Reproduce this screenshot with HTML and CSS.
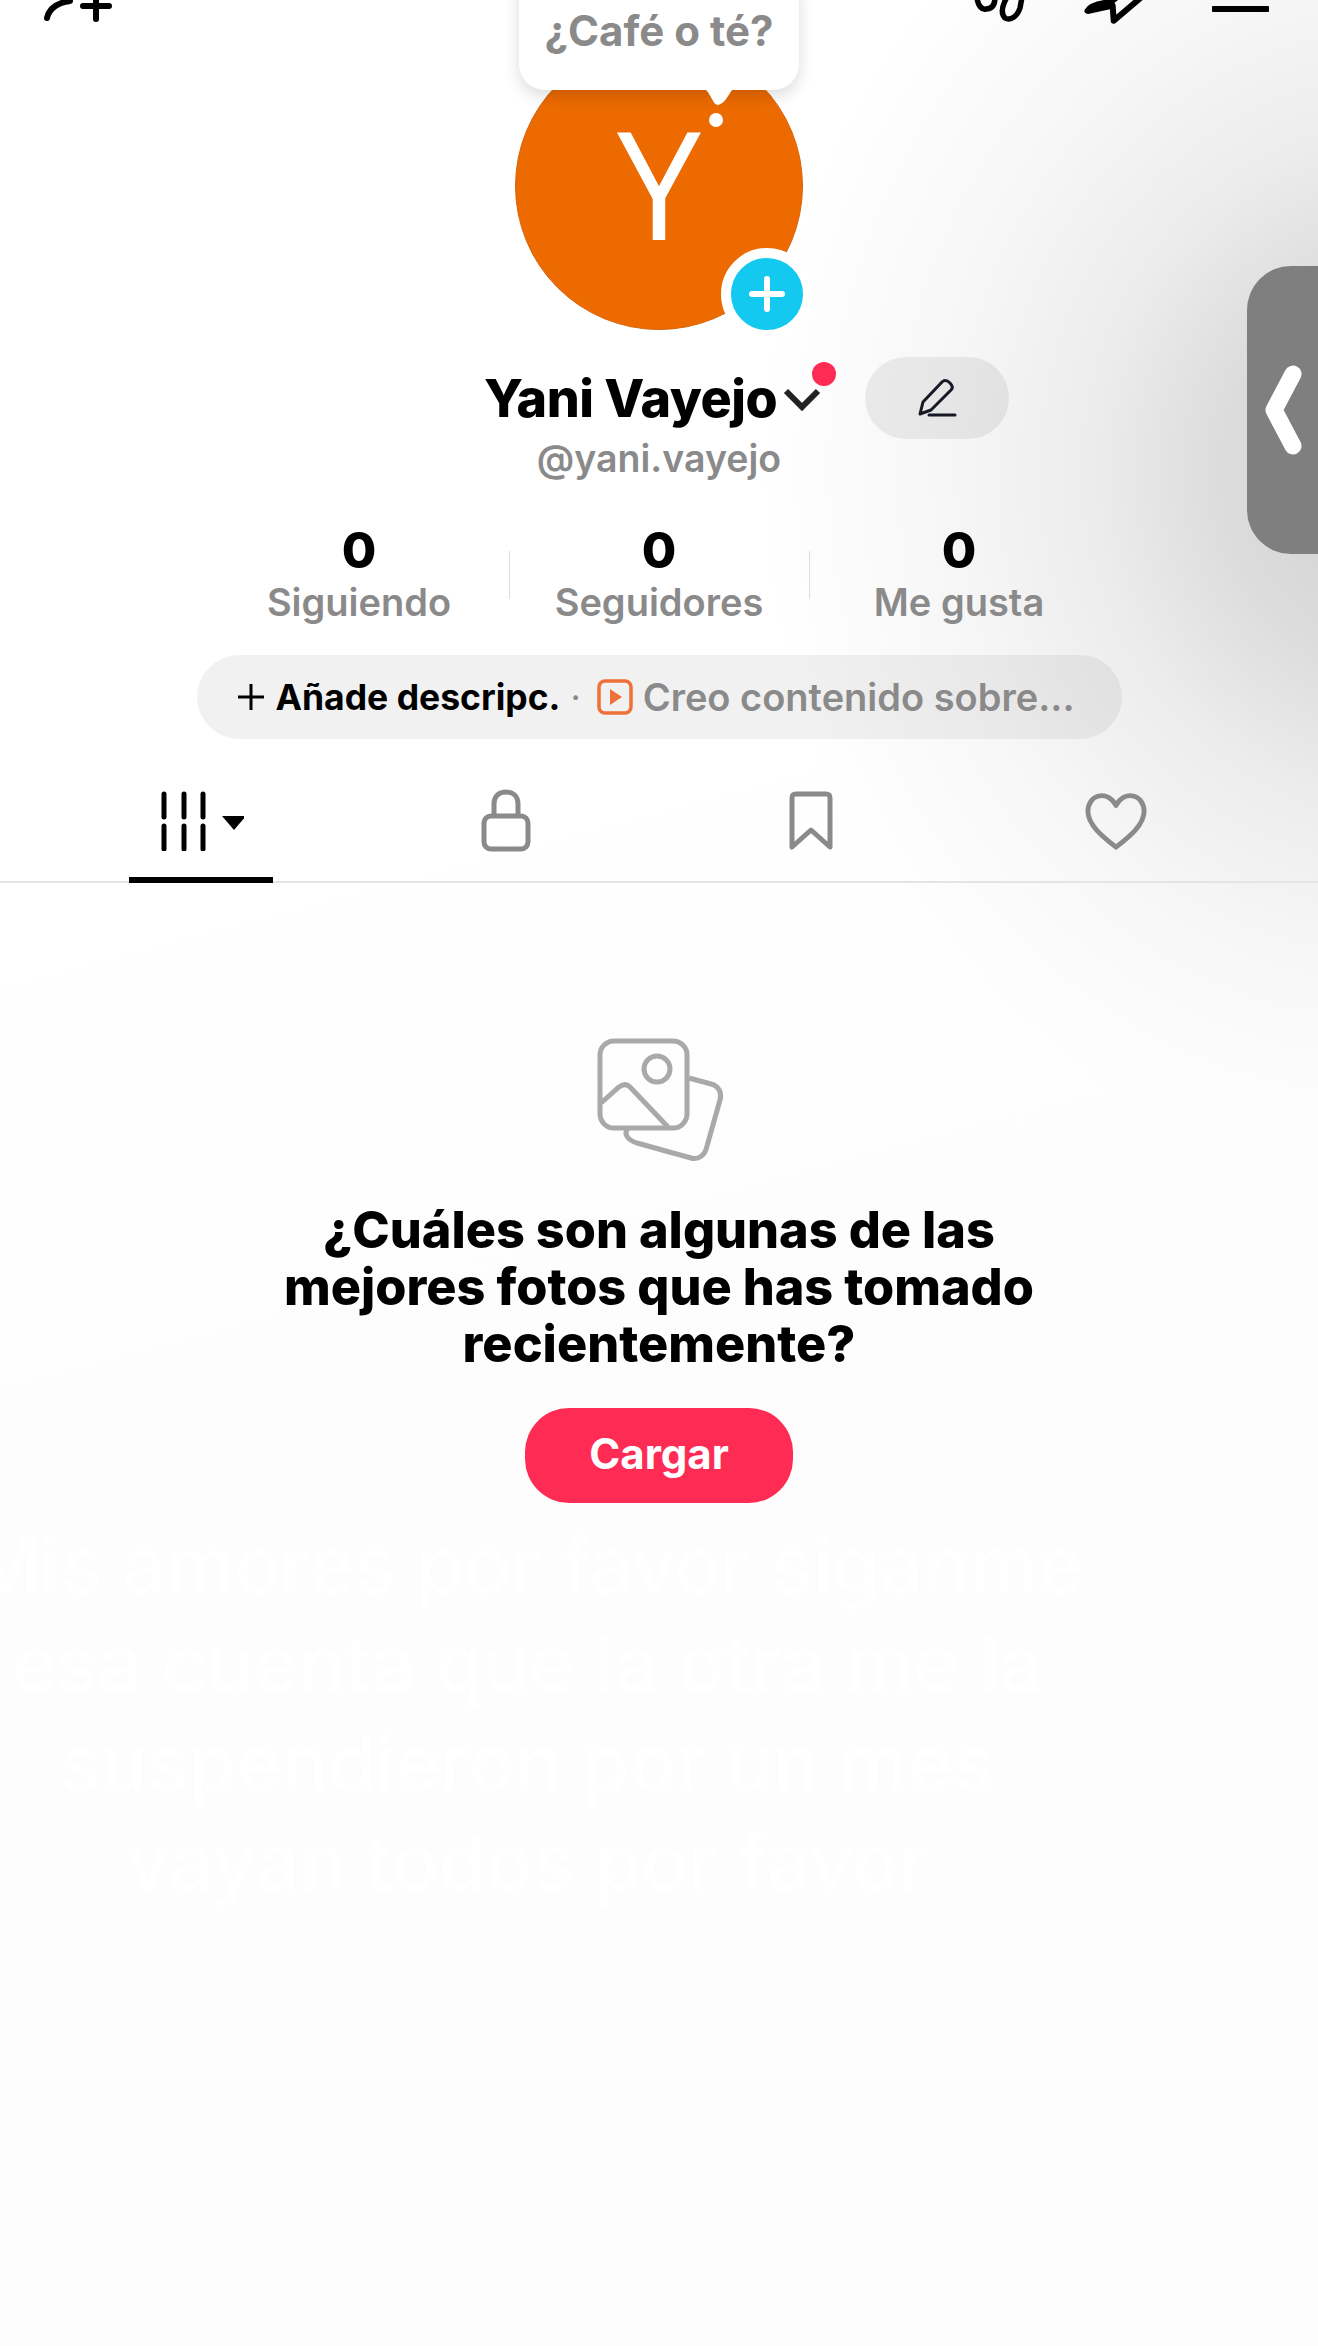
FILE: index.html
```html
<!DOCTYPE html>
<html>
<head lang="es">
  <meta charset="UTF-8">
  <title>Yani Vayejo</title>
  <link rel="stylesheet" href="styles.css">
</head>
<body>
<div class="page">
  <!-- barra superior, recortada por arriba -->
  <div class="top-bar">
    <svg class="top-icon-add" width="70" height="24" viewBox="0 0 70 24">
      <path d="M3 18C5 9 12 3 26 1" fill="none" stroke="#000" stroke-width="6" stroke-linecap="round"/>
      <path d="M39 6H65M52 -6V19" fill="none" stroke="#000" stroke-width="6" stroke-linecap="round"/>
    </svg>
    <div class="top-right">
      <svg class="top-icon-effects" width="60" height="24" viewBox="0 0 60 24">
        <path d="M3 -2C4 6 8 10 12 9C18 9 21 5 21 -3M33 -3C28 6 27 14 31 18C36 21 43 17 46 8L48 -3" fill="none" stroke="#000" stroke-width="5.5" stroke-linecap="round"/>
      </svg>
      <svg class="top-icon-share" width="66" height="24" viewBox="0 0 60 22">
        <path d="M3 10C5 6 14 3 24 2L29 -2M4 10L26 5L27 19L54 -4" fill="none" stroke="#000" stroke-width="5.5" stroke-linecap="round" stroke-linejoin="round"/>
      </svg>
      <span class="menu-line"></span>
    </div>
  </div>

  <div class="profile">
    <div class="avatar-wrap">
      <div class="avatar">Y</div>
      <div class="bubble">
        ¿Café o té?
        <svg class="bubble-tail" width="34" height="44" viewBox="0 0 34 44">
          <path d="M4 0H30C26 6 22 14 16 15C11 15 10 6 4 0Z" fill="#fff"/>
          <circle cx="14" cy="30" r="7" fill="#fff"/>
        </svg>
      </div>
      <div class="add-btn">
        <svg width="38" height="38" viewBox="0 0 38 38">
          <path d="M19 4V34M4 19H34" stroke="#fff" stroke-width="6" stroke-linecap="round"/>
        </svg>
      </div>
    </div>

    <div class="name-row">
      <div class="name">Yani Vayejo</div>
      <svg class="name-arrow" width="38" height="24" viewBox="0 0 38 24">
        <path d="M3 4L19 20L35 4" fill="none" stroke="#222222" stroke-width="6"/>
      </svg>
      <span class="red-dot"></span>
      <div class="edit-btn">
        <svg width="40" height="40" viewBox="0 0 40 40">
          <path d="M3 36L6 24L25 4C27 2 30 2 33 5C36 8 36 10 34 12L14 32Z" fill="none" stroke="#161823" stroke-width="3" stroke-linejoin="round"/>
          <path d="M12 37H38" stroke="#161823" stroke-width="3" stroke-linecap="round"/>
        </svg>
      </div>
    </div>
    <div class="handle">@yani.vayejo</div>

    <div class="stats">
      <div class="stat"><b>0</b><span>Siguiendo</span></div>
      <div class="stat-sep"></div>
      <div class="stat"><b>0</b><span>Seguidores</span></div>
      <div class="stat-sep"></div>
      <div class="stat"><b>0</b><span>Me gusta</span></div>
    </div>

    <div class="bio-pill">
      <svg width="30" height="30" viewBox="0 0 30 30">
        <path d="M15 2V28M2 15H28" stroke="#000" stroke-width="3"/>
      </svg>
      <b>Añade descripc.</b>
      <span class="bio-dot">·</span>
      <svg width="36" height="36" viewBox="0 0 36 36">
        <rect x="2" y="2" width="32" height="32" rx="6" fill="none" stroke="#f0703a" stroke-width="3.5"/>
        <path d="M13 10L25 18L13 26Z" fill="#f0703a"/>
      </svg>
      <span class="bio-text">Creo contenido sobre...</span>
    </div>
  </div>

  <div class="tabs">
    <div class="tab tab-active">
      <svg width="90" height="60" viewBox="0 0 90 60">
        <path d="M10 3V26M30 3V26M49 3V26M10 35V58M30 35V58M49 35V58" stroke="#000" stroke-width="5" stroke-linecap="round"/>
        <path d="M68 25H92L80 39Z" fill="#000"/>
      </svg>
    </div>
    <div class="tab">
      <svg width="52" height="64" viewBox="0 0 52 64">
        <path d="M14 28V15C14 7 19 3 26 3C33 3 38 7 38 15V28" fill="none" stroke="#8a8a8a" stroke-width="5"/>
        <rect x="4" y="27" width="44" height="33" rx="7" fill="none" stroke="#8a8a8a" stroke-width="5"/>
      </svg>
    </div>
    <div class="tab">
      <svg width="46" height="60" viewBox="0 0 46 60">
        <path d="M4 7C4 4 5 3 8 3H38C41 3 42 4 42 7V56L23 39L4 56Z" fill="none" stroke="#8a8a8a" stroke-width="5" stroke-linejoin="round"/>
      </svg>
    </div>
    <div class="tab">
      <svg width="62" height="60" viewBox="0 0 64 60">
        <path d="M32 14C28 6 21 3 15 4C8 5 3 12 3 20C3 34 18 46 32 57C46 46 61 34 61 20C61 12 56 5 49 4C43 3 36 6 32 14Z" fill="none" stroke="#8a8a8a" stroke-width="5" stroke-linejoin="round"/>
      </svg>
    </div>
  </div>

  <div class="empty">
    <svg class="empty-icon" width="128" height="126" viewBox="0 0 128 126">
      <rect x="3" y="3" width="87" height="87" rx="14" fill="none" stroke="#a9a9a9" stroke-width="5"/>
      <circle cx="60" cy="31" r="13" fill="none" stroke="#a9a9a9" stroke-width="5"/>
      <path d="M4 65L22 49C26 46 30 46 33 49L71 89" fill="none" stroke="#a9a9a9" stroke-width="5"/>
      <path d="M92 40L114 46C122 48 125 55 123 62L110 108C108 118 101 122 94 120L40 105C31 102 27 97 30 91" fill="none" stroke="#a9a9a9" stroke-width="5"/>
    </svg>
    <h2 class="empty-title">¿Cuáles son algunas de las<br>mejores fotos que has tomado<br>recientemente?</h2>
    <a class="upload-btn" href="javascript:void(0);">Cargar</a>
  </div>

  <!-- pegatina de texto casi invisible -->
  <div class="ghost-text">Mis amores por favor siganme<br>esa cuenta que la otra me la<br>suspendieron por un mes<br>vayan todos por favor</div>

  <div class="side-handle">
    <svg width="40" height="90" viewBox="0 0 40 90">
      <path d="M28 9L9 45L28 81" fill="none" stroke="#fff" stroke-width="17" stroke-linecap="round" stroke-linejoin="round"/>
    </svg>
  </div>
</div>
</body>
</html>
```

FILE: styles.css
```css
* {
  box-sizing: border-box;
}

body {
  margin: 0;
  font-family: "Inter", "Liberation Sans", sans-serif;
  color: #000;
}

.page {
  position: relative;
  width: 1318px;
  height: 2346px;
  overflow: hidden;
  background:
    radial-gradient(ellipse 640px 700px at 1400px 470px, #cfcfcf 0%, #dcdcdc 28%, #ececec 48%, #f7f7f7 72%, #fcfcfc 90%, rgba(253, 253, 253, 0) 100%),
    linear-gradient(165deg, #ffffff 0, #ffffff 35%, #fdfdfd 55%);
}

/* barra superior */
.top-bar {
  display: flex;
  justify-content: space-between;
  height: 24px;
  padding: 0 49px 0 44px;
  overflow: hidden;
}

.top-right {
  display: flex;
}

.top-icon-effects {
  margin-right: 50px;
}

.top-icon-share {
  margin-right: 62px;
}

.menu-line {
  width: 57px;
  height: 6px;
  margin-top: 6px;
  background: #000;
  border-radius: 1px;
}

/* perfil */
.profile {
  display: flex;
  flex-direction: column;
  align-items: center;
}

.avatar-wrap {
  position: relative;
  width: 288px;
  height: 288px;
  margin-top: 18px;
}

.avatar {
  width: 288px;
  height: 288px;
  border-radius: 50%;
  border: 1px solid #d9640a;
  background: #ec6a00;
  color: #fff;
  font-family: "Open Sans", sans-serif;
  font-weight: 400;
  font-size: 150px;
  line-height: 278px;
  text-align: center;
}

.bubble {
  position: absolute;
  left: 4px;
  top: -60px;
  width: 280px;
  height: 108px;
  padding-top: 27px;
  border-radius: 0 0 26px 26px;
  background: #fff;
  box-shadow: 0 6px 16px rgba(0, 0, 0, 0.14);
  color: #8a8a8a;
  font-size: 42px;
  font-weight: 700;
  line-height: 44px;
  text-align: center;
}

.bubble-tail {
  position: absolute;
  left: 183px;
  top: 108px;
}

.add-btn {
  position: absolute;
  right: -10px;
  bottom: -10px;
  display: flex;
  align-items: center;
  justify-content: center;
  width: 92px;
  height: 92px;
  border: 10px solid #fff;
  border-radius: 50%;
  background: #14c9f0;
}

.name-row {
  position: relative;
  display: flex;
  align-items: center;
  height: 82px;
  margin: 27px 0 0 175px;
}

.name {
  font-size: 52px;
  font-weight: 800;
  letter-spacing: -0.5px;
}

.name-arrow {
  margin: 2px 0 0 6px;
}

.red-dot {
  position: absolute;
  left: 328px;
  top: 5px;
  width: 24px;
  height: 24px;
  border-radius: 50%;
  background: #fe2c55;
}

.edit-btn {
  display: flex;
  align-items: center;
  justify-content: center;
  width: 144px;
  height: 82px;
  margin-left: 44px;
  border-radius: 41px;
  background: rgba(0, 0, 0, 0.065);
}

.handle {
  height: 46px;
  margin-top: -3px;
  color: #8a8a8a;
  font-size: 37.5px;
  font-weight: 600;
  line-height: 46px;
}

.stats {
  display: flex;
  align-items: center;
  margin-top: 42px;
}

.stat {
  display: flex;
  flex-direction: column;
  align-items: center;
  width: 299px;
}

.stat b {
  font-size: 50px;
  font-weight: 800;
  line-height: 52px;
}

.stat span {
  margin-top: 2px;
  color: #8a8a8a;
  font-size: 38px;
  font-weight: 600;
  line-height: 48px;
}

.stat-sep {
  width: 1px;
  height: 48px;
  background: #dddddd;
}

.bio-pill {
  display: flex;
  align-items: center;
  gap: 10px;
  width: 925px;
  height: 84px;
  margin-top: 29px;
  padding-left: 39px;
  border-radius: 42px;
  background: rgba(0, 0, 0, 0.055);
  font-size: 35.5px;
  white-space: nowrap;
}

.bio-pill b {
  font-weight: 700;
}

.bio-dot {
  margin-right: 6px;
  color: #8a8a8a;
}

.bio-text {
  color: #8a8a8a;
  font-size: 38px;
  font-weight: 600;
}

/* pestañas */
.tabs {
  display: flex;
  height: 115px;
  margin-top: 29px;
  padding-left: 48px;
  border-bottom: 2px solid #e4e4e4;
}

.tab {
  display: flex;
  align-items: center;
  justify-content: center;
  width: 305px;
  height: 115px;
  padding-bottom: 10px;
}

.tab-active {
  width: 144px;
  margin: 0 80px 0 81px;
  border-bottom: 6px solid #000;
  padding: 0 4px 4px 0;
}

/* vacío */
.empty {
  display: flex;
  flex-direction: column;
  align-items: center;
}

.empty-icon {
  margin: 155px 0 0 4px;
}

.empty-title {
  margin: 37px 0 0;
  font-size: 50.4px;
  font-weight: 800;
  line-height: 57px;
  text-align: center;
}

.upload-btn {
  display: block;
  width: 268px;
  height: 95px;
  margin-top: 36px;
  border-radius: 44px;
  background: #fe2c55;
  color: #fff;
  font-size: 42px;
  font-weight: 700;
  line-height: 92px;
  text-align: center;
  text-decoration: none;
}

.ghost-text {
  position: absolute;
  left: -60px;
  top: 1516px;
  width: 1174px;
  color: #ffffff;
  font-size: 77px;
  font-weight: 500;
  line-height: 99px;
  text-align: center;
  white-space: nowrap;
}

.side-handle {
  position: absolute;
  right: 0;
  top: 266px;
  display: flex;
  align-items: center;
  width: 71px;
  height: 288px;
  padding-left: 18px;
  border-radius: 44px 0 0 44px;
  background: #7f7f7f;
}
```
